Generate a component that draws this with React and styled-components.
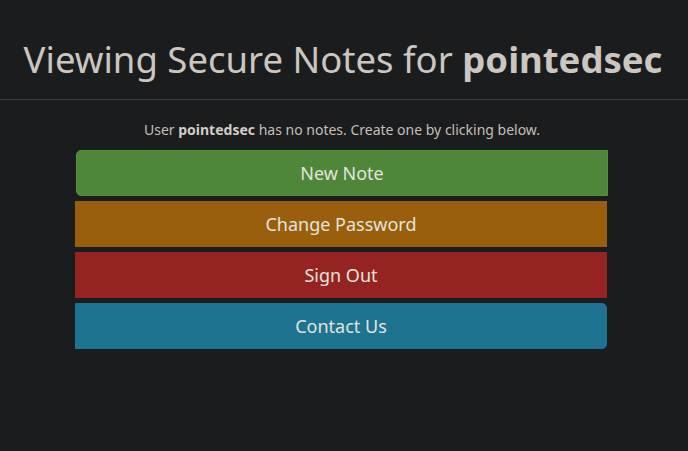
import React from "react";
import styled, { createGlobalStyle } from "styled-components";

const Global = createGlobalStyle`
  html, body {
    margin: 0;
    padding: 0;
    background: #1b1c1e;
  }
  body {
    font-family: "Noto Sans", "Open Sans", sans-serif;
    color: #cbc6c0;
  }
`;

const Page = styled.div`
  min-height: 451px;
  background: #1b1c1e;
`;

const Header = styled.header`
  padding: 35px 2px 15px 0;
  border-bottom: 1px solid #3a3b3d;
  text-align: center;
`;

const Title = styled.h1`
  margin: 0;
  font-size: 36.5px;
  line-height: 49px;
  font-weight: 400;
  color: #cbc6c0;
  b {
    font-weight: 700;
  }
`;

const Main = styled.main`
  padding-top: 20px;
`;

const Info = styled.p`
  margin: 0 0 11px;
  padding-right: 4px;
  font-size: 14px;
  line-height: 19px;
  text-align: center;
  color: #c4bfb9;
  b {
    font-weight: 700;
    color: #d2cdc7;
  }
`;

const Actions = styled.div`
  width: 532px;
  margin: 0 81px 0 75px;
  display: flex;
  flex-direction: column;
  gap: 5px;
`;

const Button = styled.button`
  box-sizing: border-box;
  height: 46px;
  width: 100%;
  margin-left: ${(p) => (p.$shift ? "1px" : "0")};
  border: 1px solid ${(p) => p.$border};
  background: ${(p) => p.$bg};
  color: #e2e4dc;
  font-family: "Noto Sans", "Open Sans", sans-serif;
  font-size: 18px;
  cursor: pointer;
  border-radius: ${(p) => p.$radius};
  padding: 0;
`;

export default function App() {
  return (
    <Page>
      <Global />
      <Header>
        <Title>
          Viewing Secure Notes for <b>pointedsec</b>
        </Title>
      </Header>
      <Main>
        <Info>
          User <b>pointedsec</b> has no notes. Create one by clicking below.
        </Info>
        <Actions>
          <Button $shift $bg="#4e863a" $border="#55913f" $radius="5px 0 0 5px">
            New Note
          </Button>
          <Button $bg="#9a5f0d" $border="#9a5f0d" $radius="0">
            Change Password
          </Button>
          <Button $bg="#952322" $border="#952322" $radius="0">
            Sign Out
          </Button>
          <Button $bg="#1e7490" $border="#1e7490" $radius="0 5px 5px 0">
            Contact Us
          </Button>
        </Actions>
      </Main>
    </Page>
  );
}
